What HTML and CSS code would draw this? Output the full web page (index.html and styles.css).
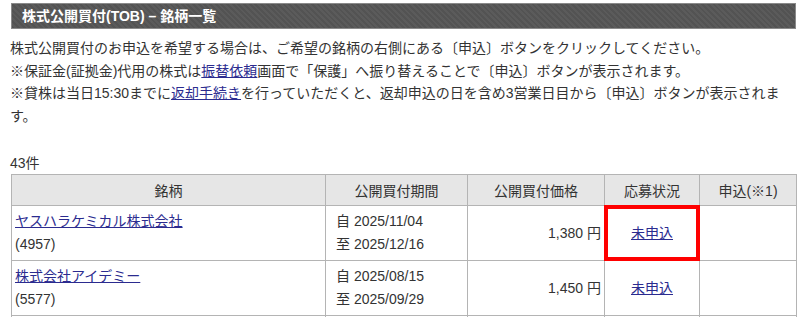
FILE: index.html
```html
<!DOCTYPE html>
<html lang="ja">
<head>
<meta charset="utf-8">
<link rel="stylesheet" href="styles.css">
</head>
<body>
<div class="page">
  <h1 class="title">株式公開買付(TOB) – 銘柄一覧</h1>
  <div class="notes">
    <p>株式公開買付のお申込を希望する場合は、ご希望の銘柄の右側にある〔申込〕ボタンをクリックしてください。</p>
    <p>※保証金(証拠金)代用の株式は<a href="#">振替依頼</a>画面で「保護」へ振り替えることで〔申込〕ボタンが表示されます。</p>
    <p>※貸株は当日15:30までに<a href="#">返却手続き</a>を行っていただくと、返却申込の日を含め3営業日目から〔申込〕ボタンが表示されます。</p>
  </div>
  <div class="count">43件</div>
  <table class="list">
    <colgroup>
      <col class="c1"><col class="c2"><col class="c3"><col class="c4"><col class="c5">
    </colgroup>
    <thead>
      <tr><th>銘柄</th><th>公開買付期間</th><th>公開買付価格</th><th>応募状況</th><th>申込(※1)</th></tr>
    </thead>
    <tbody>
      <tr>
        <td class="name"><a href="#">ヤスハラケミカル株式会社</a><br>(4957)</td>
        <td class="period">自 2025/11/04<br>至 2025/12/16</td>
        <td class="price">1,380 円</td>
        <td class="status marked"><a href="#">未申込</a></td>
        <td></td>
      </tr>
      <tr>
        <td class="name"><a href="#">株式会社アイデミー</a><br>(5577)</td>
        <td class="period">自 2025/08/15<br>至 2025/09/29</td>
        <td class="price">1,450 円</td>
        <td class="status"><a href="#">未申込</a></td>
        <td></td>
      </tr>
      <tr>
        <td class="name"><a href="#">&nbsp;</a><br>&nbsp;</td>
        <td class="period">&nbsp;<br>&nbsp;</td>
        <td class="price"></td>
        <td class="status"></td>
        <td></td>
      </tr>
    </tbody>
  </table>
</div>
</body>
</html>
```
FILE: styles.css
```css
html, body {
  margin: 0;
  padding: 0;
  background: #fff;
}
body {
  font-family: "Liberation Sans", "Noto Sans CJK JP", sans-serif;
  font-size: 14px;
  color: #333;
}
.page {
  padding: 3px 4px 0 10px;
  overflow: hidden;
  height: 317px;
  box-sizing: border-box;
}
.title {
  margin: 0 0 0 1px;
  height: 26px;
  box-sizing: border-box;
  border: 1px solid #8a8a8a;
  background: repeating-linear-gradient(45deg, #535353 0 2px, #5b5b5b 2px 4px);
  color: #fff;
  font-size: 14px;
  font-weight: bold;
  line-height: 24px;
  padding-left: 10px;
}
.notes {
  margin-top: 8px;
  line-height: 22.5px;
}
.notes p {
  margin: 0;
}
a {
  color: #2b2b8f;
  text-decoration: underline;
}
.count {
  margin-top: 25px;
  line-height: 22px;
}
.list {
  margin-left: 1px;
  border-collapse: collapse;
  table-layout: fixed;
  width: 785px;
}
.c1 { width: 314px; }
.c2 { width: 142px; }
.c3 { width: 137px; }
.c4 { width: 95px; }
.c5 { width: 97px; }
.list th, .list td {
  border: 1px solid #b4b4b4;
}
.list th {
  background: #e6e6e6;
  font-weight: normal;
  height: 30px;
  padding: 0;
  text-align: center;
}
.list td {
  height: 45px;
  padding: 4px 3px;
  line-height: 23px;
  vertical-align: middle;
}
.list td.name {
  padding-left: 3px;
}
.list td.period {
  padding-left: 10px;
}
.list td.price {
  text-align: right;
  padding-right: 3px;
}
.list td.status {
  text-align: center;
}
.marked {
  position: relative;
}
.marked::after {
  content: "";
  position: absolute;
  left: -1px;
  top: -1px;
  right: -1px;
  bottom: -1px;
  border: 4px solid #f00;
}
```
